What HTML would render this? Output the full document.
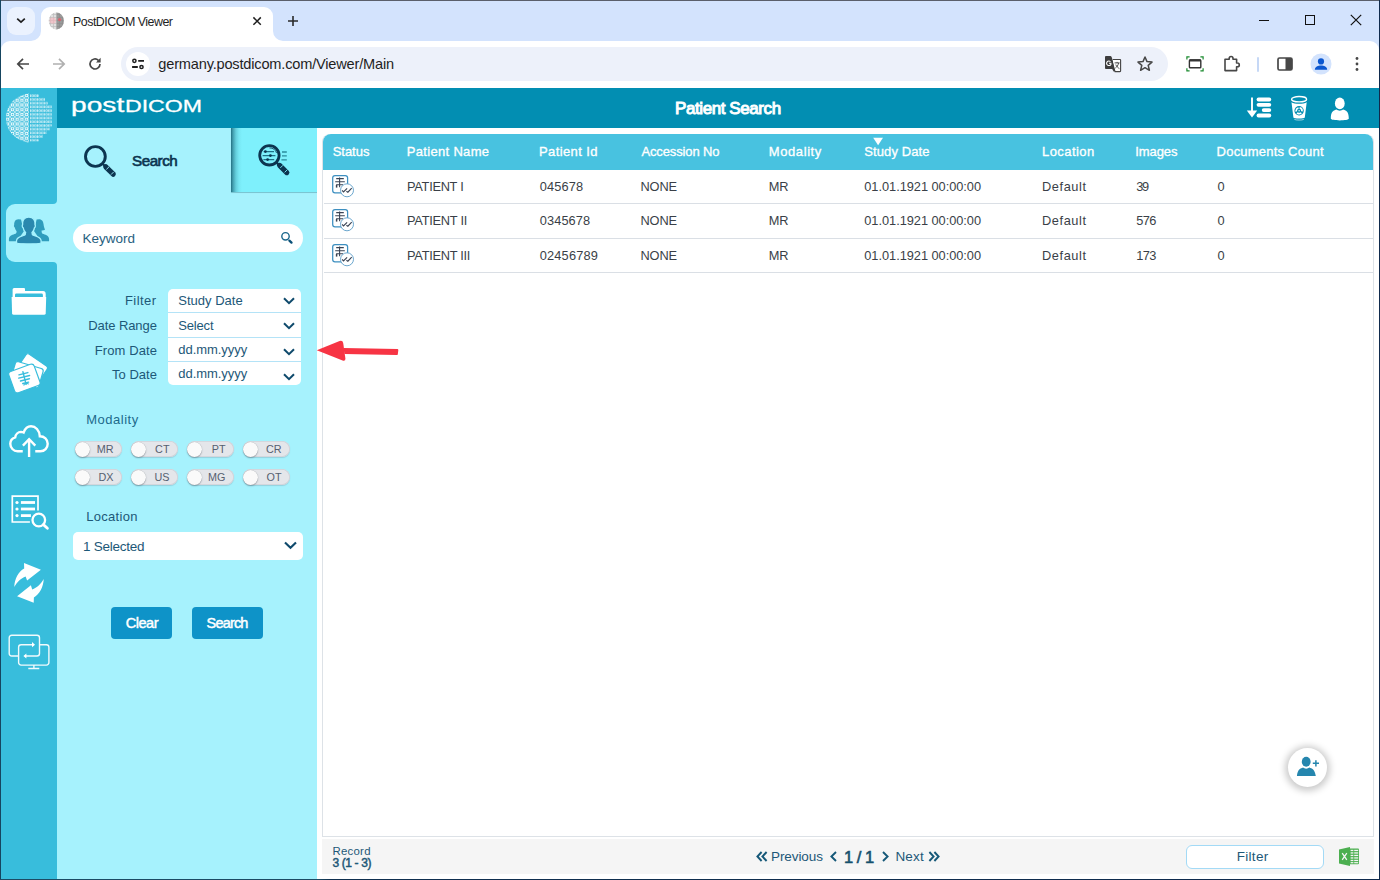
<!DOCTYPE html>
<html lang="en">
<head>
<meta charset="utf-8">
<title>PostDICOM Viewer</title>
<style>
*{box-sizing:border-box;margin:0;padding:0}
html,body{width:1380px;height:880px;overflow:hidden;background:#fff}
body{font-family:"Liberation Sans",sans-serif;position:relative;color:#1d5878}
.abs{position:absolute}
.t{position:absolute;white-space:nowrap;line-height:1}
svg{position:absolute;overflow:visible}
/* window border */
#bt{left:0;top:0;width:1380px;height:1px;background:#5a5f6b;z-index:50}
#bl{left:0;top:0;width:1px;height:880px;background:#164560;z-index:50}
#br{left:1379px;top:0;width:1px;height:880px;background:#0f2a4d;z-index:50}
#bb{left:0;top:879px;width:1380px;height:1px;background:linear-gradient(90deg,#1c4b64 0,#1c4b64 317px,#10304f 330px,#0f2a4d 100%);z-index:50}
/* chrome */
#tabstrip{left:0;top:0;width:1380px;height:88px;background:#d3e3fd}
#toolbar{left:1px;top:41px;width:1378px;height:47px;background:#fff;border-radius:9px 9px 0 0}
#tab{left:41px;top:7px;width:232px;height:34px;background:#fff;border-radius:9px 9px 0 0}
#tabsearch{left:7px;top:7px;width:28px;height:28px;border-radius:9px;background:#ebf2fe}
#omni{left:121px;top:47px;width:1047px;height:34px;border-radius:17px;background:#edf1fa}
#site{left:126px;top:52px;width:24px;height:24px;border-radius:12px;background:#fff}
/* app */
#hdr{left:57px;top:88px;width:1322px;height:40px;background:#028eb2}
#side{left:1px;top:88px;width:56px;height:791px;background:#38bddc}
#panel{left:57px;top:128px;width:260px;height:751px;background:#a6f2fd}
#tab2{left:231px;top:128px;width:86px;height:64px;background:linear-gradient(90deg,rgba(10,75,95,.78) 0,rgba(10,80,100,.5) 2px,rgba(10,90,110,.22) 5px,rgba(10,90,110,.06) 8px,rgba(10,90,110,0) 11px),#7ef0fc;box-shadow:0 1px .6px rgba(0,70,90,.26)}
#selitem{left:6px;top:204px;width:52px;height:58px;background:#a6f2fd;border-radius:9px 0 0 9px}
#main{left:317px;top:128px;width:1062px;height:751px;background:#fff}

.tg{position:absolute;width:46.5px;height:16px;border-radius:8px;background:#e4e6ea;box-shadow:inset 0 0 0 .8px #ced2d9, 0 1px 1px rgba(90,110,130,.25);font-size:10.8px;color:#566070;line-height:16.5px;text-align:right;padding-right:8px}
.tg i{position:absolute;left:.3px;top:.5px;width:15px;height:15px;border-radius:8px;background:#fafafa;box-shadow:0 1px 1.5px rgba(60,70,80,.4), 0 0 .5px rgba(60,70,80,.5)}

.th{font-size:13px;color:#fff;-webkit-text-stroke:.33px #fff}
.td{font-size:12.8px;color:#3a3f47}
</style>
</head>
<body>
<div class="abs" id="tabstrip"></div>
<div class="abs" id="tab"></div>
<div class="abs" id="toolbar"></div>
<div class="abs" id="tabsearch"></div>
<div class="abs" id="omni"></div>
<div class="abs" id="site"></div>
<div class="abs" id="hdr"></div>
<div class="abs" id="side"></div>
<div class="abs" id="panel"></div>
<div class="abs" id="tab2"></div>
<div class="abs" id="selitem"></div>
<div class="abs" id="main"></div>

<!-- tab search chevron -->
<svg style="left:15px;top:16px" width="12" height="10" viewBox="0 0 12 10"><path d="M2.2 2.6 L6 6.2 L9.8 2.6" fill="none" stroke="#1f1f1f" stroke-width="1.7" stroke-linecap="butt"/></svg>
<!-- tab curves -->
<svg style="left:31px;top:31px" width="10" height="10" viewBox="0 0 10 10"><path d="M0 10 H10 V0 A10 10 0 0 1 0 10Z" fill="#fff"/></svg>
<svg style="left:273px;top:31px" width="10" height="10" viewBox="0 0 10 10"><path d="M10 10 H0 V0 A10 10 0 0 0 10 10Z" fill="#fff"/></svg>
<!-- favicon -->
<svg style="left:48px;top:12px" width="17" height="18" viewBox="0 0 17 18"><defs><clipPath id="fc"><ellipse cx="8.3" cy="9" rx="7.6" ry="8.4"/></clipPath><pattern id="fp" width="3" height="3" patternUnits="userSpaceOnUse"><rect width="3" height="3" fill="#bdbdbd"/><rect width="2.3" height="2.3" fill="#e0e0e0"/></pattern></defs><g clip-path="url(#fc)"><rect width="17" height="18" fill="url(#fp)"/><rect x="8.6" width="9" height="18" fill="#6f6f6f" opacity=".62"/><circle cx="4.8" cy="8.6" r="3.2" fill="#f7b3ba" opacity=".6"/><circle cx="11.6" cy="7.6" r="1.7" fill="#e25a66" opacity=".8"/></g></svg>
<div class="t" id="tabtitle" style="left:73.00px;top:16.00px;letter-spacing:-0.484px;font-size:12.4px;color:#1f1f1f">PostDICOM Viewer</div>
<svg style="left:251px;top:15px" width="12" height="12" viewBox="0 0 12 12"><path d="M2.4 2.4 L9.8 9.8 M9.8 2.4 L2.4 9.8" stroke="#1f1f1f" stroke-width="1.5" fill="none"/></svg>
<svg style="left:286px;top:14px" width="14" height="14" viewBox="0 0 14 14"><path d="M7 2 V12 M2 7 H12" stroke="#2a2a2a" stroke-width="1.6" fill="none"/></svg>
<!-- window controls -->
<svg style="left:1259px;top:20px" width="11" height="2" viewBox="0 0 11 2"><rect width="10" height="1" y="0" fill="#111"/></svg>
<svg style="left:1304px;top:14px" width="12" height="12" viewBox="0 0 12 12"><rect x="1.5" y="1.5" width="9" height="9" fill="none" stroke="#111" stroke-width="1"/></svg>
<svg style="left:1350px;top:14px" width="12" height="12" viewBox="0 0 12 12"><path d="M.8 .8 L11.2 11.2 M11.2 .8 L.8 11.2" stroke="#111" stroke-width="1.2" fill="none"/></svg>
<!-- nav buttons -->
<svg style="left:16px;top:57px" width="14" height="14" viewBox="0 0 14 14"><path d="M13 7 H2.2 M7 1.8 L1.8 7 L7 12.2" stroke="#474747" stroke-width="1.7" fill="none"/></svg>
<svg style="left:52px;top:57px" width="14" height="14" viewBox="0 0 14 14"><path d="M1 7 H11.8 M7 1.8 L12.2 7 L7 12.2" stroke="#b0b0b0" stroke-width="1.7" fill="none"/></svg>
<svg style="left:88px;top:57px" width="14" height="14" viewBox="0 0 14 14"><path d="M12 7 A5 5 0 1 1 10.4 3.3" stroke="#474747" stroke-width="1.7" fill="none"/><path d="M12.6 .8 V5.4 H8 Z" fill="#474747"/></svg>
<!-- site info (tune) -->
<svg style="left:131px;top:58px" width="14" height="12" viewBox="0 0 14 12"><path d="M7.2 2.8 H13 M1.1 9 H6.8" stroke="#1f1f1f" stroke-width="1.8" fill="none"/><circle cx="3.4" cy="2.8" r="1.6" fill="none" stroke="#1f1f1f" stroke-width="1.5"/><circle cx="10.5" cy="9" r="1.6" fill="none" stroke="#1f1f1f" stroke-width="1.5"/></svg>
<div class="t" id="url" style="left:158.30px;top:57.00px;letter-spacing:-0.192px;font-size:14.6px;color:#1f1f1f">germany.postdicom.com/Viewer/Main</div>
<!-- translate -->
<svg style="left:1104px;top:56px" width="18" height="17" viewBox="0 0 18 17"><path d="M1.9 0 H6.4 Q7.3 0 7.6 .9 L11.4 12.9 H1.9 Q1 12.9 1 12 V.9 Q1 0 1.9 0 Z" fill="#3e3e3e"/><path d="M8.7 3.5 H16 Q16.6 3.5 16.6 4.1 V15 Q16.6 15.6 16 15.6 H10.6" fill="#fff" stroke="#434343" stroke-width="1.1"/><path d="M8 3.5 L11.6 15.6 H9.6 L8.2 12.9 Z" fill="#3e3e3e"/><path d="M10.6 6.9 H15.6 M13.1 5.9 V6.9 M14.6 7 C14.2 9.4 12.6 11.2 11.4 12 M11.8 8.6 C12.4 10.2 14 11.8 15.4 12.6" stroke="#434343" stroke-width=".95" fill="none"/><path d="M6.5 5.6 A2.3 2.3 0 1 0 6.9 8.4 V7.3 H5" stroke="#fff" stroke-width="1.1" fill="none"/></svg>
<!-- star -->
<svg style="left:1136px;top:55px" width="18" height="17" viewBox="0 0 18 17"><path d="M9 2 L11 6.6 L16 7.1 L12.2 10.4 L13.4 15.3 L9 12.7 L4.6 15.3 L5.8 10.4 L2 7.1 L7 6.6 Z" fill="none" stroke="#474747" stroke-width="1.5" stroke-linejoin="round"/></svg>
<!-- screenshot ext -->
<svg style="left:1186px;top:56px" width="18" height="16" viewBox="0 0 18 16"><rect x="3.4" y="3.9" width="11.4" height="7.9" rx=".8" fill="none" stroke="#333" stroke-width="1.4"/><path d="M3.4 4.4 H14.8" stroke="#333" stroke-width="2.2"/><path d="M.9 3.6 V.9 H3.6 M14.4 .9 H17.1 V3.6 M17.1 12.2 V14.9 H14.4 M3.6 14.9 H.9 V12.2" fill="none" stroke="#1a8a2e" stroke-width="1.2"/></svg>
<!-- puzzle -->
<svg style="left:1223px;top:55px" width="18" height="17" viewBox="0 0 18 17"><path d="M2 4.2 H6.2 V3.4 A1.9 1.9 0 0 1 10 3.4 V4.2 H13.6 V8 H14.4 A1.9 1.9 0 0 1 14.4 11.8 H13.6 V15.6 H2 Z" fill="none" stroke="#474747" stroke-width="1.6" stroke-linejoin="round"/></svg>
<div class="abs" style="left:1257px;top:56.5px;width:2px;height:15px;background:#c6d8f6;border-radius:1px"></div>
<!-- side panel -->
<svg style="left:1277px;top:57px" width="16" height="14" viewBox="0 0 16 14"><rect x="1" y="1" width="14" height="12" rx="1.5" fill="none" stroke="#474747" stroke-width="1.7"/><rect x="8.5" y="1" width="6.5" height="12" fill="#474747"/></svg>
<!-- avatar -->
<svg style="left:1310px;top:53px" width="22" height="22" viewBox="0 0 22 22"><circle cx="11" cy="11" r="10.5" fill="#d3e3fd"/><circle cx="11" cy="8.4" r="3.1" fill="#0b57d0"/><path d="M4.8 16.8 C5 13.6 8 12.6 11 12.6 C14 12.6 17 13.6 17.2 16.8 Z" fill="#0b57d0"/></svg>
<!-- menu -->
<svg style="left:1355px;top:56px" width="4" height="16" viewBox="0 0 4 16"><circle cx="2" cy="2.5" r="1.4" fill="#474747"/><circle cx="2" cy="8" r="1.4" fill="#474747"/><circle cx="2" cy="13.5" r="1.4" fill="#474747"/></svg>
<!--CHROME-->

<!-- logo globe -->
<svg style="left:5px;top:92px" width="50" height="52" viewBox="0 0 50 52"><defs>
<clipPath id="gL"><path d="M24 1.6 C11 3 1 13 1 26 C1 39 11 49 24 50.6 Z"/></clipPath>
<clipPath id="gR"><path d="M25 2 H34 V5.6 H40 V9.4 H43 V13 H46.8 V34.6 H45 V38.4 H41.6 V42 H38 V45.8 H34 V49.6 H25 Z"/></clipPath>
<pattern id="pL" width="4.75" height="4.75" patternUnits="userSpaceOnUse" patternTransform="translate(.3 1.1)"><path d="M0 0 L4.75 4.75 M4.75 0 L0 4.75" stroke="#fff" stroke-width=".75" opacity=".8"/><rect x="1.15" y="1.15" width="2.45" height="2.45" rx=".7" fill="#38bddc" stroke="#fff" stroke-width="1.1"/></pattern>
<pattern id="pR" width="3.55" height="3.72" patternUnits="userSpaceOnUse" patternTransform="translate(25 2.2)"><rect x=".2" y=".3" width=".8" height="2.5" fill="#fff" opacity=".92"/><rect x="1.6" y=".6" width="1.45" height="1.9" rx=".4" fill="none" stroke="#fff" stroke-width=".6" opacity=".8"/></pattern></defs>
<rect width="25" height="52" fill="url(#pL)" clip-path="url(#gL)"/><rect x="24" width="26" height="52" fill="url(#pR)" clip-path="url(#gR)"/></svg>
<div class="t" id="logo1" style="left:70.9px;top:96px;font-size:19.3px;color:#fff;-webkit-text-stroke:.3px #fff;transform-origin:0 0;transform:scaleX(1.46)">post</div>
<div class="t" id="logo2" style="left:125px;top:98px;font-size:17.2px;color:#fff;-webkit-text-stroke:.3px #fff;transform-origin:0 0;transform:scaleX(1.345)">DICOM</div>
<div class="t" id="ptitle" style="left:675.00px;top:100.00px;letter-spacing:-0.412px;font-size:17px;color:#fff;-webkit-text-stroke:.95px #fff">Patient Search</div>
<!-- sort icon -->
<svg style="left:1246px;top:96px" width="26" height="23" viewBox="0 0 26 23"><path d="M6 1.5 V15" stroke="#fff" stroke-width="1.9" fill="none"/><path d="M.8 14.5 H11.2 L6 21.5 Z" fill="#fff"/><rect x="10.6" y="1.6" width="14.6" height="3.8" rx="1.9" fill="#fff"/><rect x="10.6" y="6.9" width="14.6" height="3.8" rx="1.9" fill="#fff"/><rect x="15.8" y="12.2" width="9.4" height="3.8" rx="1.9" fill="#fff"/><rect x="10.6" y="17.6" width="14.6" height="3.8" rx="1.9" fill="#fff"/></svg>
<!-- recycle bin -->
<svg style="left:1290px;top:95px" width="18" height="26" viewBox="0 0 18 26"><ellipse cx="9.1" cy="4.2" rx="7.5" ry="2.7" fill="none" stroke="#fff" stroke-width="1.4"/><path d="M1.5 7.2 L3.4 22.4 C3.8 23.9 14.4 23.9 14.8 22.4 L16.7 7.2 C13.6 9.4 4.6 9.4 1.5 7.2 Z" fill="#fff"/><circle cx="9.1" cy="15.8" r="4.7" fill="#028eb2"/><circle cx="9.1" cy="15.8" r="2.9" fill="none" stroke="#fff" stroke-width="1.7" stroke-dasharray="4.5 1.57" transform="rotate(-80 9.1 15.8)"/><circle cx="9.1" cy="15.8" r=".7" fill="#fff"/><path d="M4.4 24.4 C6 25.3 12.2 25.3 13.8 24.4" stroke="#fff" stroke-width=".8" fill="none" opacity=".75"/></svg>
<!-- user -->
<svg style="left:1330px;top:96.7px" width="20" height="24" viewBox="0 0 20 24"><ellipse cx="9.8" cy="6.4" rx="4.9" ry="5.9" fill="#fff"/><path d="M.8 21.5 C.8 14 4 13.4 6.6 12.6 C8 14 11.6 14 13 12.6 C15.6 13.4 18.8 14 18.8 21.5 C18.8 24 .8 24 .8 21.5 Z" fill="#fff"/></svg>
<!--HEADER-->

<!-- selected item concave corners -->
<svg style="left:53px;top:200px" width="4" height="4" viewBox="0 0 4 4"><path d="M4 0 V4 H0 A4 4 0 0 0 4 0Z" fill="#a6f2fd"/></svg>
<svg style="left:53px;top:262px" width="4" height="4" viewBox="0 0 4 4"><path d="M4 4 V0 H0 A4 4 0 0 1 4 4Z" fill="#a6f2fd"/></svg>
<!-- patients icon -->
<svg style="left:8px;top:217px" width="42" height="27" viewBox="0 0 42 27">
<g fill="#2f9dbd"><path d="M10.4 2.2 C7.2 2.2 6 5 6.2 8 C5.6 8.6 6 10 6.8 10.6 C7.2 12.4 8 13.6 8.6 14.2 C8.6 15.4 8.4 16.2 7.6 16.8 C5 17.8 1.6 18.4 1 21.4 C.8 22.6 .9 23.6 1 24.2 H9 L16 14 L13 2.6 Z"/><path d="M31 2.2 C34 2.2 35.4 4.6 35.6 7.4 C35.8 9.6 36.4 11 37 12.6 C36.2 13.4 34.6 13.6 33.6 13.4 C33.6 15 33.8 16.2 34.6 16.8 C37.2 17.8 40.4 18.4 41 21.4 C41.2 22.6 41.1 23.6 41 24.2 H33 L26 14 L28.6 2.6 Z"/></g>
<path d="M20.8 0 C16 0 14.2 3.6 14.6 7.8 C14 8.4 14.2 10.2 15.2 10.8 C15.6 13 16.6 14.6 17.6 15.4 C17.6 16.8 17.4 17.6 16.4 18.2 C13.4 19.4 9.4 19.8 8.6 23.2 C8.4 24.4 8.5 25.4 8.6 26 C12 27.2 29.6 27.2 33 26 C33.1 25.4 33.2 24.4 33 23.2 C32.2 19.8 28.2 19.4 25.2 18.2 C24.2 17.6 24 16.8 24 15.4 C25 14.6 26 13 26.4 10.8 C27.4 10.2 27.6 8.4 27 7.8 C27.4 3.6 25.6 0 20.8 0 Z" fill="#2a88ae" stroke="#a6f2fd" stroke-width="1.3"/>
</svg>
<!-- folder -->
<svg style="left:11px;top:287px" width="36" height="29" viewBox="0 0 36 29"><path d="M1.6 9.9 V2.4 Q1.6 .9 3.1 .9 H13 Q14 .9 14 2 V4 H32 Q34.7 4 34.7 7 V9.9 H31.9 V8 Q31.9 6.6 30.5 6.6 H5.4 Q4 6.6 4 8 V9.9 Z" fill="#fff"/><path d="M.6 9.9 H35.2 L34.7 26.2 Q34.6 27.8 33 27.8 H2.8 Q1.2 27.8 1.1 26.2 Z" fill="#fff"/></svg>
<!-- xray cards -->
<svg style="left:9px;top:352px" width="40" height="42" viewBox="0 0 40 42"><g fill="#fff" stroke="#38bddc" stroke-width="1.2"><rect x="18.4" y=".8" width="25.6" height="19" rx="2.4" transform="rotate(34.6 18.4 .8)"/><rect x="7" y="9" width="29" height="20" rx="2.6" transform="rotate(16.5 7 9)"/><rect x="1.9" y="15.2" width="27" height="22.6" rx="3" transform="rotate(-20 15.4 26.5)"/></g><g transform="rotate(-14 15.4 26.5)" stroke="#38bddc" stroke-width="1.4" fill="none" stroke-linecap="round"><path d="M15.6 19.6 V32.4"/><path d="M11 21.6 H20.2 M10 24.8 H21.2 M11 28 H20.2 M12.6 31 H18.6"/><path d="M13.4 32.8 C13.6 31.6 15 31.4 15.6 32.4 C16.2 31.4 17.6 31.6 17.8 32.8" stroke-width="1.1"/></g></svg>
<!-- cloud upload -->
<svg style="left:8px;top:424px" width="42" height="36" viewBox="0 0 42 36"><path d="M14.75 27.3 H9.6 C5.4 27.3 2.3 23.8 2.3 19.8 C2.3 16.6 4.2 14.4 7.2 13.4 C7.6 10.4 10 8 13 7.9 C13.8 7.9 14.8 8.1 15.6 8.5 C17 4.8 19.6 2.3 23 2.3 C27.6 2.3 31.4 6.2 31.8 12.2 C36.4 12.2 39.7 15.4 39.7 19.8 C39.7 24 36.6 27.3 32.4 27.3 H27.25" fill="none" stroke="#fff" stroke-width="2.4" stroke-linecap="butt"/><path d="M21.1 33 V15.4 M14.9 21.6 L21.1 15.2 L27.3 21.6" fill="none" stroke="#fff" stroke-width="2.4" stroke-linecap="butt" stroke-linejoin="miter"/></svg>
<!-- list search -->
<svg style="left:10px;top:494px" width="40" height="38" viewBox="0 0 40 38"><path d="M19.9 28 H2.3 V2.2 H28 V16.6" fill="none" stroke="#fff" stroke-width="1.7"/><g fill="#fff"><circle cx="7" cy="8.5" r="1.6"/><circle cx="7" cy="15" r="1.6"/><circle cx="7" cy="21.6" r="1.6"/><rect x="10.9" y="7.1" width="14.1" height="2.8"/><rect x="10.9" y="13.6" width="14.1" height="2.8"/><rect x="10.9" y="20.2" width="10" height="2.8"/></g><circle cx="28.8" cy="26" r="6.3" fill="#38bddc" stroke="#fff" stroke-width="2.3"/><path d="M33.4 30.6 L37.4 34.2" stroke="#fff" stroke-width="2.8" stroke-linecap="round"/></svg>
<!-- sync arrows -->
<svg style="left:12px;top:562px" width="36" height="42" viewBox="0 0 36 42"><path d="M2.3 24.9 C2.6 17 6.5 9.5 12.2 6.6 L12 1.1 L28.9 7.7 L15.1 18.6 L13.6 14.4 C9 16 5 20 2.3 24.9 Z" fill="#fff"/><path d="M31.7 17.1 C31.4 25 27.6 32.4 21.9 35.4 L21.7 40.8 L5.1 34.2 L18.9 23.3 L20.2 27.5 C25 26 29 22 31.7 17.1 Z" fill="#fff"/></svg>
<!-- screens transfer -->
<svg style="left:8.3px;top:634.4px" width="42" height="36" viewBox="0 0 42 36"><g fill="none" stroke="#fff" stroke-width="1.4" opacity=".93"><path d="M10.6 22 H3.7 a2.5 2.5 0 0 1 -2.5 -2.5 V3.8 a2.5 2.5 0 0 1 2.5 -2.5 H29 a2.5 2.5 0 0 1 2.5 2.5 V19.5 a2.5 2.5 0 0 1 -2.5 2.5 H17"/><path d="M31.5 10.7 H38.4 a2.5 2.5 0 0 1 2.5 2.5 V28.6 a2.5 2.5 0 0 1 -2.5 2.5 H13.1 a2.5 2.5 0 0 1 -2.5 -2.5 V13.2 a2.5 2.5 0 0 1 2.5 -2.5 H25.4"/><path d="M25.9 31.1 V34.3 M20.3 34.5 H31.3"/></g><path d="M24 8.1 L27 10.7 L24 13.3 Z M18.4 19.4 L15.4 22 L18.4 24.6 Z" fill="#fff"/></svg>
<!--SIDEBAR-->

<!-- search tab icon -->
<svg style="left:82px;top:143px" width="36" height="36" viewBox="0 0 36 36"><circle cx="13.4" cy="13.5" r="9.9" fill="none" stroke="#0c3550" stroke-width="2.9"/><path d="M20.6 20.8 L23.6 23.8" stroke="#0c3550" stroke-width="2.2"/><path d="M23.8 23.8 L31.2 31.2" stroke="#0c3550" stroke-width="5.2" stroke-linecap="round"/><path d="M24.4 26.4 L27 23.8 M29 31.6 L31.6 29" stroke="#a6f2fd" stroke-width=".9"/></svg>
<div class="t" id="tsearch" style="left:132.00px;top:153.00px;letter-spacing:-0.475px;font-size:15.2px;color:#0c3550;-webkit-text-stroke:.65px #0c3550">Search</div>
<!-- advanced search icon -->
<svg style="left:256px;top:141px" width="36" height="36" viewBox="0 0 36 36"><circle cx="13.4" cy="14.3" r="9.7" fill="none" stroke="#0c3550" stroke-width="2.8"/><path d="M13.4 6.9 A7.6 7.6 0 0 1 20.6 12" fill="none" stroke="#0c3550" stroke-width=".8"/><g stroke="#1f6f86" stroke-width="1.2" fill="none"><path d="M7.6 10.6 H18 M6.6 14.6 H19.4 M7.4 18.6 H18.2"/><path d="M26 11 H30.8 M26 14.9 H30.8 M25.4 18.8 H30.8" stroke="#2a8a9c" stroke-width="1.3"/></g><g fill="#0c3550"><circle cx="9.4" cy="10.6" r="1.4"/><circle cx="14.4" cy="14.6" r="1.4"/><circle cx="11.6" cy="18.6" r="1.4"/></g><path d="M20.6 21.6 L23.6 24.6" stroke="#0c3550" stroke-width="2.2"/><path d="M23.6 24.4 L30.8 31.6" stroke="#0c3550" stroke-width="5.2" stroke-linecap="round"/><path d="M24.3 26.9 L26.9 24.3 M28.6 31.4 L31.4 28.6" stroke="#7ef0fc" stroke-width=".9"/></svg>
<!-- keyword -->
<div class="abs" style="left:73px;top:224px;width:230px;height:28px;border-radius:14px;background:#fff"></div>
<div class="t" id="kw" style="left:82.40px;top:232.00px;letter-spacing:0.031px;font-size:13.5px;color:#27617f">Keyword</div>
<svg style="left:280px;top:231px" width="14" height="14" viewBox="0 0 14 14"><circle cx="5.5" cy="5.3" r="3.7" fill="none" stroke="#1a668b" stroke-width="1.4"/><path d="M9.4 9.6 L11.5 11.6" stroke="#0b5178" stroke-width="2.3" stroke-linecap="round"/></svg>
<!-- filter rows -->
<div class="abs" style="left:168px;top:289px;width:133px;height:96px;border-radius:5px;background:#fff"></div>
<div class="abs" style="left:168px;top:312px;width:133px;height:1px;background:#b4e3f7"></div>
<div class="abs" style="left:168px;top:337px;width:133px;height:1px;background:#b4e3f7"></div>
<div class="abs" style="left:168px;top:361px;width:133px;height:1px;background:#b4e3f7"></div>
<div class="t" id="l1" style="left:125.00px;top:294.00px;letter-spacing:0.428px;font-size:13px">Filter</div>
<div class="t" id="l2" style="left:88.20px;top:319.00px;letter-spacing:-0.072px;font-size:13px">Date Range</div>
<div class="t" id="l3" style="left:94.70px;top:344.00px;letter-spacing:0.104px;font-size:13px">From Date</div>
<div class="t" id="l4" style="left:112.10px;top:368.00px;letter-spacing:0.005px;font-size:13px">To Date</div>
<div class="t" id="v1" style="left:178.30px;top:294.00px;letter-spacing:0.002px;font-size:13px">Study Date</div>
<div class="t" id="v2" style="left:178.30px;top:319.00px;letter-spacing:-0.184px;font-size:13px">Select</div>
<div class="t" id="v3" style="left:178.30px;top:343.00px;letter-spacing:-0.049px;font-size:13px">dd.mm.yyyy</div>
<div class="t" id="v4" style="left:178.30px;top:367.00px;letter-spacing:-0.049px;font-size:13px">dd.mm.yyyy</div>
<svg style="left:283px;top:296.6px" width="12" height="8" viewBox="0 0 12 8"><path d="M1 1.2 L6 6.2 L11 1.2" fill="none" stroke="#0f4a6c" stroke-width="2"/></svg>
<svg style="left:283px;top:321.6px" width="12" height="8" viewBox="0 0 12 8"><path d="M1 1.2 L6 6.2 L11 1.2" fill="none" stroke="#0f4a6c" stroke-width="2"/></svg>
<svg style="left:283px;top:347.6px" width="12" height="8" viewBox="0 0 12 8"><path d="M1 1.2 L6 6.2 L11 1.2" fill="none" stroke="#0f4a6c" stroke-width="2"/></svg>
<svg style="left:283px;top:372.6px" width="12" height="8" viewBox="0 0 12 8"><path d="M1 1.2 L6 6.2 L11 1.2" fill="none" stroke="#0f4a6c" stroke-width="2"/></svg>
<!-- red arrow -->
<svg style="left:316px;top:338px;z-index:5" width="84" height="26" viewBox="0 0 84 26"><path d="M27.5 9.9 L81.4 11 Q82.4 11 82.3 12.2 L81.8 16.2 Q81.7 17.1 80.6 17.1 L28.5 15.9 Z" fill="#f73444"/><path d="M.8 12.2 L23.6 3 Q26.6 2 27.2 5 L29.4 20.4 Q29.6 23.4 26.6 22.6 Z" fill="#f73444"/></svg>
<!-- modality -->
<div class="t" id="lmod" style="left:86.30px;top:413.00px;letter-spacing:0.499px;font-size:13px;color:#1d6a8c">Modality</div>
<div class="tg" style="left:75px;top:441px"><i></i><span id="tg00">MR</span></div>
<div class="tg" style="left:131px;top:441px"><i></i><span id="tg01">CT</span></div>
<div class="tg" style="left:187px;top:441px"><i></i><span id="tg02">PT</span></div>
<div class="tg" style="left:243px;top:441px"><i></i><span id="tg03">CR</span></div>
<div class="tg" style="left:75px;top:469px"><i></i><span id="tg10">DX</span></div>
<div class="tg" style="left:131px;top:469px"><i></i><span id="tg11">US</span></div>
<div class="tg" style="left:187px;top:469px"><i></i><span id="tg12">MG</span></div>
<div class="tg" style="left:243px;top:469px"><i></i><span id="tg13">OT</span></div>

<div class="t" id="lloc" style="left:86.30px;top:510.00px;letter-spacing:0.283px;font-size:13px;color:#1d5878">Location</div>
<div class="abs" style="left:73px;top:532px;width:230px;height:28px;border-radius:5px;background:#fff"></div>
<div class="t" id="vloc" style="left:83.00px;top:540.00px;letter-spacing:-0.254px;font-size:13.5px;color:#1d5878">1 Selected</div>
<svg style="left:284px;top:541px" width="13" height="9" viewBox="0 0 13 9"><path d="M1 1.4 L6.5 6.8 L12 1.4" fill="none" stroke="#0f4a6c" stroke-width="2.1"/></svg>
<div class="abs" style="left:111px;top:607px;width:61px;height:32px;border-radius:4px;background:#0e93c8"></div>
<div class="abs" style="left:192px;top:607px;width:71px;height:32px;border-radius:4px;background:#0e93c8"></div>
<div class="t" id="bclear" style="left:125.80px;top:616.00px;letter-spacing:-0.480px;font-size:14.5px;color:#fff;-webkit-text-stroke:.45px #fff">Clear</div>
<div class="t" id="bsearch" style="left:206.60px;top:616.00px;letter-spacing:-0.836px;font-size:14.5px;color:#fff;-webkit-text-stroke:.45px #fff">Search</div>
<!--PANEL-->

<div class="abs" style="left:322px;top:134px;width:1052px;height:703px;border:1px solid #dde2e7;border-top:none;border-radius:8px 8px 0 0"></div>
<div class="abs" style="left:322.6px;top:134px;width:1050.5px;height:36px;background:#48c2e0;border-radius:8px 8px 0 0"></div>
<svg style="left:872px;top:137px" width="12" height="8" viewBox="0 0 12 8"><path d="M1.2 .8 H11 L6.1 8.3 Z" fill="#fff"/></svg>
<div class="t th" id="h0" style="left:332.70px;top:145.00px;letter-spacing:-0.031px;">Status</div>
<div class="t th" id="h1" style="left:406.80px;top:145.00px;letter-spacing:0.315px;">Patient Name</div>
<div class="t th" id="h2" style="left:539.00px;top:145.00px;letter-spacing:0.389px;">Patient Id</div>
<div class="t th" id="h3" style="left:641.40px;top:145.00px;letter-spacing:-0.123px;">Accession No</div>
<div class="t th" id="h4" style="left:768.80px;top:145.00px;letter-spacing:0.585px;">Modality</div>
<div class="t th" id="h5" style="left:864.30px;top:145.00px;letter-spacing:0.091px;">Study Date</div>
<div class="t th" id="h6" style="left:1042.00px;top:145.00px;letter-spacing:0.440px;">Location</div>
<div class="t th" id="h7" style="left:1135.20px;top:145.00px;letter-spacing:-0.066px;">Images</div>
<div class="t th" id="h8" style="left:1216.60px;top:145.00px;letter-spacing:0.212px;">Documents Count</div>
<div class="abs" style="left:324px;top:203px;width:1049px;height:1px;background:#dadfe5"></div>
<svg style="left:332px;top:174.0px" width="24" height="24" viewBox="0 0 24 24"><rect x=".7" y="1.5" width="14.9" height="17.4" rx="2.3" fill="#fff" stroke="#3d8fc0" stroke-width="1.25"/><g stroke="#3a4354" stroke-width="1.1" fill="none"><path d="M7.6 3.4 V13.2 M4.2 4.6 H11.8 M3.2 7.7 H12.8 M4.2 10.7 H11"/><path d="M4.6 10.8 V13.6" stroke-width="1.5"/></g><circle cx="15" cy="16.3" r="6.5" fill="#fff" stroke="#5b9dc8" stroke-width=".9"/><path d="M10.1 16.4 L11.5 18 L15.1 14.3 M14.4 17.2 L15.9 18.2 L19.7 14.2" fill="none" stroke="#3a4354" stroke-width="1.15"/></svg>
<div class="t td" id="r0c0" style="left:407.00px;top:181.00px;letter-spacing:-0.287px;">PATIENT I</div>
<div class="t td" id="r0c1" style="left:539.80px;top:181.00px;letter-spacing:0.123px;">045678</div>
<div class="t td" id="r0c2" style="left:640.40px;top:181.00px;letter-spacing:-0.079px;">NONE</div>
<div class="t td" id="r0c3" style="left:768.80px;top:181.00px;letter-spacing:-0.260px;">MR</div>
<div class="t td" id="r0c4" style="left:864.30px;top:181.00px;letter-spacing:-0.039px;">01.01.1921 00:00:00</div>
<div class="t td" id="r0c5" style="left:1042.00px;top:181.00px;letter-spacing:0.585px;">Default</div>
<div class="t td" id="r0c6" style="left:1136.20px;top:181.00px;letter-spacing:-1.217px;">39</div>
<div class="t td" id="r0c7" style="left:1217.60px;top:181.00px;letter-spacing:0.000px;">0</div>
<div class="abs" style="left:324px;top:238px;width:1049px;height:1px;background:#dadfe5"></div>
<svg style="left:332px;top:208.2px" width="24" height="24" viewBox="0 0 24 24"><rect x=".7" y="1.5" width="14.9" height="17.4" rx="2.3" fill="#fff" stroke="#3d8fc0" stroke-width="1.25"/><g stroke="#3a4354" stroke-width="1.1" fill="none"><path d="M7.6 3.4 V13.2 M4.2 4.6 H11.8 M3.2 7.7 H12.8 M4.2 10.7 H11"/><path d="M4.6 10.8 V13.6" stroke-width="1.5"/></g><circle cx="15" cy="16.3" r="6.5" fill="#fff" stroke="#5b9dc8" stroke-width=".9"/><path d="M10.1 16.4 L11.5 18 L15.1 14.3 M14.4 17.2 L15.9 18.2 L19.7 14.2" fill="none" stroke="#3a4354" stroke-width="1.15"/></svg>
<div class="t td" id="r1c0" style="left:407.00px;top:215.00px;letter-spacing:-0.250px;">PATIENT II</div>
<div class="t td" id="r1c1" style="left:539.80px;top:215.00px;letter-spacing:0.083px;">0345678</div>
<div class="t td" id="r1c2" style="left:640.40px;top:215.00px;letter-spacing:-0.079px;">NONE</div>
<div class="t td" id="r1c3" style="left:768.80px;top:215.00px;letter-spacing:-0.260px;">MR</div>
<div class="t td" id="r1c4" style="left:864.30px;top:215.00px;letter-spacing:-0.039px;">01.01.1921 00:00:00</div>
<div class="t td" id="r1c5" style="left:1042.00px;top:215.00px;letter-spacing:0.585px;">Default</div>
<div class="t td" id="r1c6" style="left:1136.20px;top:215.00px;letter-spacing:-0.617px;">576</div>
<div class="t td" id="r1c7" style="left:1217.60px;top:215.00px;letter-spacing:0.000px;">0</div>
<div class="abs" style="left:324px;top:272px;width:1049px;height:1px;background:#dadfe5"></div>
<svg style="left:332px;top:242.8px" width="24" height="24" viewBox="0 0 24 24"><rect x=".7" y="1.5" width="14.9" height="17.4" rx="2.3" fill="#fff" stroke="#3d8fc0" stroke-width="1.25"/><g stroke="#3a4354" stroke-width="1.1" fill="none"><path d="M7.6 3.4 V13.2 M4.2 4.6 H11.8 M3.2 7.7 H12.8 M4.2 10.7 H11"/><path d="M4.6 10.8 V13.6" stroke-width="1.5"/></g><circle cx="15" cy="16.3" r="6.5" fill="#fff" stroke="#5b9dc8" stroke-width=".9"/><path d="M10.1 16.4 L11.5 18 L15.1 14.3 M14.4 17.2 L15.9 18.2 L19.7 14.2" fill="none" stroke="#3a4354" stroke-width="1.15"/></svg>
<div class="t td" id="r2c0" style="left:407.00px;top:250.00px;letter-spacing:-0.270px;">PATIENT III</div>
<div class="t td" id="r2c1" style="left:539.80px;top:250.00px;letter-spacing:0.154px;">02456789</div>
<div class="t td" id="r2c2" style="left:640.40px;top:250.00px;letter-spacing:-0.079px;">NONE</div>
<div class="t td" id="r2c3" style="left:768.80px;top:250.00px;letter-spacing:-0.260px;">MR</div>
<div class="t td" id="r2c4" style="left:864.30px;top:250.00px;letter-spacing:-0.039px;">01.01.1921 00:00:00</div>
<div class="t td" id="r2c5" style="left:1042.00px;top:250.00px;letter-spacing:0.585px;">Default</div>
<div class="t td" id="r2c6" style="left:1136.20px;top:250.00px;letter-spacing:-0.617px;">173</div>
<div class="t td" id="r2c7" style="left:1217.60px;top:250.00px;letter-spacing:0.000px;">0</div>
<!--TABLE-->

<div class="abs" style="left:322px;top:839px;width:1052px;height:35px;background:#f5f5f5"></div>
<div class="t" id="frec" style="left:332.40px;top:846.00px;letter-spacing:0.283px;font-size:11.4px;color:#1d5878">Record</div>
<div class="t" id="frec2" style="left:332.40px;top:857.00px;letter-spacing:-0.364px;font-size:12px;color:#1d5878;-webkit-text-stroke:.5px #1d5878">3 (1 - 3)</div>
<svg style="left:756px;top:851px" width="12" height="11" viewBox="0 0 12 11"><path d="M5.6 1 L1.4 5.5 L5.6 10 M10.6 1 L6.4 5.5 L10.6 10" fill="none" stroke="#155878" stroke-width="1.9"/></svg>
<div class="t" id="fprev" style="left:771.00px;top:850.00px;letter-spacing:-0.082px;font-size:13.5px;color:#1d5878">Previous</div>
<svg style="left:829px;top:851px" width="9" height="11" viewBox="0 0 9 11"><path d="M7 1 L2.4 5.5 L7 10" fill="none" stroke="#155878" stroke-width="1.9"/></svg>
<div class="t" id="fpage" style="left:843.90px;top:849.00px;letter-spacing:-0.482px;font-size:16.5px;color:#15506e;-webkit-text-stroke:.6px #15506e">1 / 1</div>
<svg style="left:881px;top:851px" width="9" height="11" viewBox="0 0 9 11"><path d="M2 1 L6.6 5.5 L2 10" fill="none" stroke="#155878" stroke-width="1.9"/></svg>
<div class="t" id="fnext" style="left:895.40px;top:850.00px;letter-spacing:0.164px;font-size:13.5px;color:#1d5878">Next</div>
<svg style="left:928.4px;top:851px" width="12" height="11" viewBox="0 0 12 11"><path d="M1.4 1 L5.6 5.5 L1.4 10 M6.4 1 L10.6 5.5 L6.4 10" fill="none" stroke="#155878" stroke-width="1.9"/></svg>
<div class="abs" style="left:1186px;top:845px;width:138px;height:24px;border:1.5px solid #a3daf6;border-radius:6px;background:#fff"></div>
<div class="t" id="ffilter" style="left:1236.70px;top:850.00px;letter-spacing:0.299px;font-size:13.5px;color:#1d5878">Filter</div>
<!-- excel -->
<svg style="left:1338px;top:846px" width="22" height="21" viewBox="0 0 22 21"><rect x="10" y="2.6" width="11" height="15.6" rx="1" fill="#4caf50"/><g fill="#f5f5f5"><rect x="12.6" y="3.8" width="2.8" height="1.3"/><rect x="16.2" y="3.8" width="4" height="1.3"/><rect x="12.6" y="6.3" width="2.8" height="1.3"/><rect x="16.2" y="6.3" width="4" height="1.3"/><rect x="12.6" y="8.8" width="2.8" height="1.3"/><rect x="16.2" y="8.8" width="4" height="1.3"/><rect x="12.6" y="11.3" width="2.8" height="1.3"/><rect x="16.2" y="11.3" width="4" height="1.3"/><rect x="12.6" y="13.8" width="2.8" height="1.3"/><rect x="16.2" y="13.8" width="4" height="1.3"/><rect x="12.6" y="16.1" width="2.8" height="1.2"/><rect x="16.2" y="16.1" width="4" height="1.2"/></g><path d="M1 3.4 L12 1 V20 L1 17.6 Z" fill="#4caf50"/><path d="M4.2 7.2 L8.8 13.8 M8.8 7.2 L4.2 13.8" stroke="#f5f5f5" stroke-width="1.3" fill="none"/></svg>
<!-- FAB -->
<div class="abs" style="left:1288px;top:747.5px;width:39px;height:39px;border-radius:20px;background:#fff;box-shadow:0 1px 7px 3px rgba(0,0,0,.21)"></div>
<svg style="left:1296px;top:756px" width="24" height="21" viewBox="0 0 24 21"><ellipse cx="10.2" cy="5.8" rx="4.4" ry="5" fill="#2586ae"/><path d="M.9 20 C1.6 13.4 4.6 12.6 7 11.6 C8.6 13 11.8 13 13.4 11.6 C15.8 12.6 18.8 13.4 19.8 20 Z" fill="#2586ae"/><path d="M19.9 4.2 V10.4 M16.8 7.3 H23" stroke="#2586ae" stroke-width="1.5" fill="none"/></svg>
<!--FOOTER-->
<div class="abs" id="bt"></div><div class="abs" id="bl"></div><div class="abs" id="br"></div><div class="abs" id="bb"></div>
</body>
</html>
